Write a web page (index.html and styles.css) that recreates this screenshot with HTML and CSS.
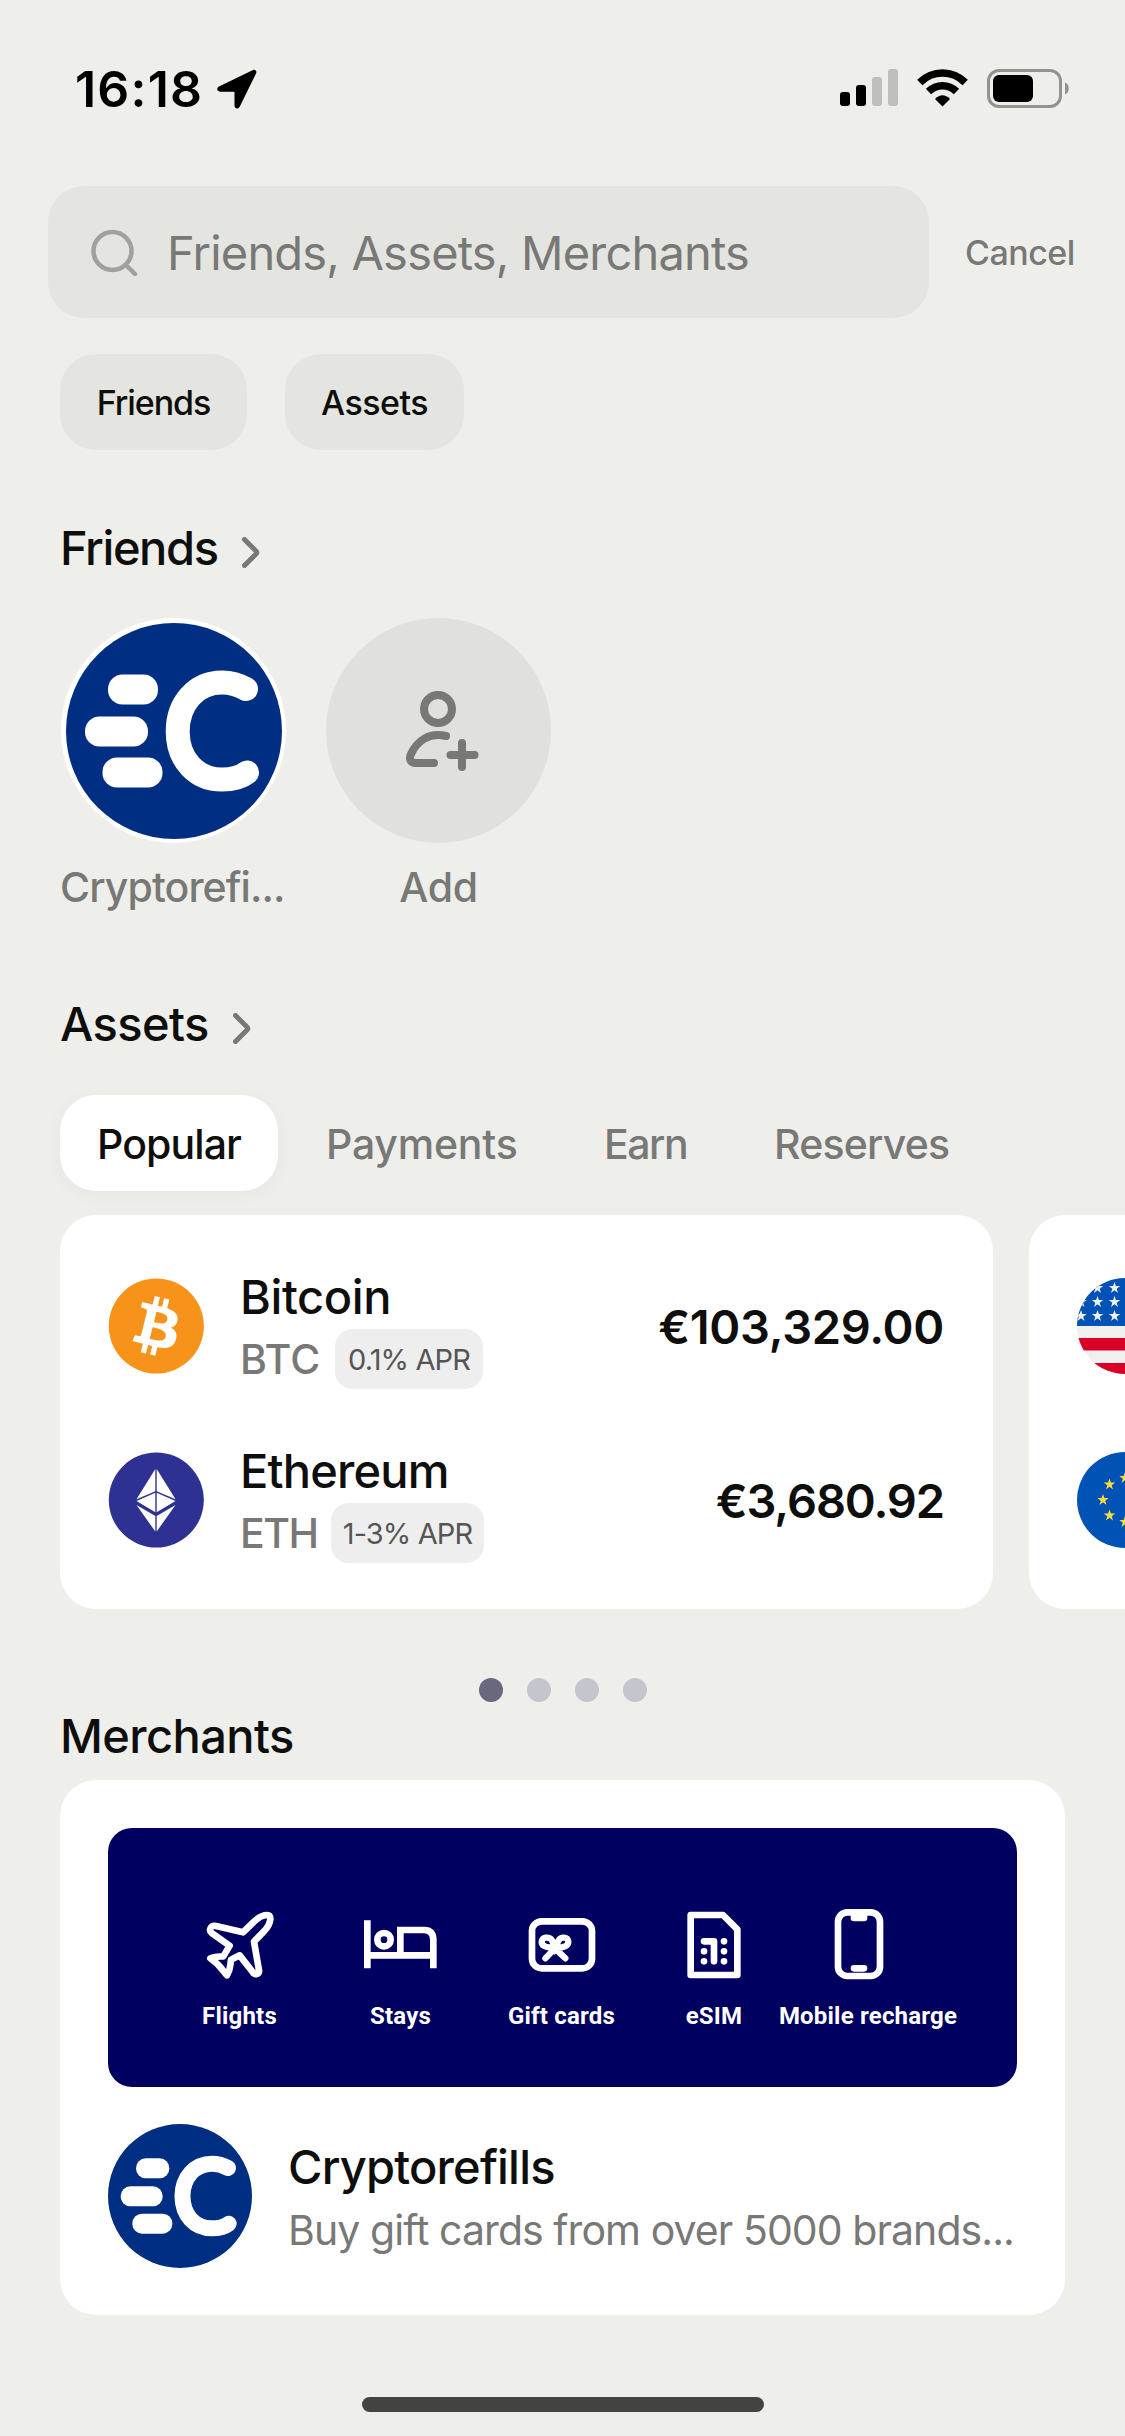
FILE: index.html
```html
<!DOCTYPE html>
<html lang="en">
<head>
  <meta charset="UTF-8">
  <meta name="viewport" content="width=device-width, initial-scale=1.0">
  <title>Search</title>
  <link rel="stylesheet" href="styles.css">
</head>
<body>

  <svg class="defs" width="0" height="0">
    <symbol id="logo" viewBox="5 4.5 216 216">
      <rect x="5" y="4.5" width="216" height="216" fill="#002e83"/>
      <g fill="#fff">
        <rect x="47" y="56" width="50" height="30" rx="14.5"/>
        <rect x="24" y="98" width="63" height="30" rx="14.5"/>
        <rect x="41.5" y="139" width="60" height="30" rx="14.5"/>
      </g>
      <path d="M185 70.500C177 66 170 64 161 64c-26 0-44.300 21-44.300 49s18.300 48 44.300 48c9.500 0 18-1.500 25-7" fill="none" stroke="#fff" stroke-width="24" stroke-linecap="round"/>
    </symbol>
    <symbol id="chevron" viewBox="0 0 18 31">
      <path d="M2.500 2.500L14 14q1.500 1.500 0 3L2.500 28.500" fill="none" stroke="#787876" stroke-width="5" stroke-linecap="round"/>
    </symbol>
    <path id="star" d="M0-6L1.400-1.900H5.700L2.200.7 3.500 4.900 0 2.300-3.500 4.900-2.200.7-5.700-1.900H-1.400z"/>
  </svg>

  <div class="status-bar">
    <div class="time">16:18</div>
    <svg class="location" width="40" height="40" viewBox="0 0 40 40"><path d="M35.500 1.200 2 17.500c-3 1.600-2 5.200 1.200 5.200H16.500c.7 0 1 .3 1 1V36.500c0 3.300 3.700 4 5.200 1.200L39 4.500C40.200 2 38 0 35.500 1.200z"/></svg>
    <div class="status-icons">
      <svg width="58" height="38" viewBox="0 0 58 38">
        <rect x="0" y="23" width="10" height="14" rx="3"/>
        <rect x="16" y="16" width="10" height="21" rx="3"/>
        <rect x="32" y="8" width="10" height="29" rx="3" fill="#bebfba"/>
        <rect x="48" y="0" width="10" height="37" rx="3" fill="#bebfba"/>
      </svg>
      <svg class="wifi" width="51" height="38" viewBox="0 0 51 38">
        <path d="M2.800 13.500C15.500.8 35.500.8 48.200 13.500" fill="none" stroke="#000" stroke-width="7.500"/>
        <path d="M11.500 22.500c8-7.800 20-7.800 28 0" fill="none" stroke="#000" stroke-width="7.500"/>
        <path d="M25.500 37.500 18 30q7.500-7.500 15 0z"/>
      </svg>
      <svg width="83" height="39" viewBox="0 0 83 39">
        <rect x="1.500" y="1.500" width="72" height="36" rx="10.500" fill="none" stroke="#92938f" stroke-width="3"/>
        <rect x="6" y="6" width="40" height="27" rx="6"/>
        <path d="M78 13.500c5 1.500 5 10.500 0 12z" fill="#92938f"/>
      </svg>
    </div>
  </div>

  <div class="search-row">
    <div class="search-box">
      <svg width="48" height="48" viewBox="0 0 48 48"><path d="M41.500 23A19 19 0 1 1 3.500 23a19 19 0 0 1 38 0zM36 37l9 9" fill="none" stroke="#a0a09d" stroke-width="4.500" stroke-linecap="round"/></svg>
      <span class="placeholder">Friends, Assets, Merchants</span>
    </div>
    <span class="cancel">Cancel</span>
  </div>

  <div class="chips">
    <div class="chip chip-friends">Friends</div>
    <div class="chip chip-assets">Assets</div>
  </div>

  <div class="heading heading-friends">Friends <svg width="18" height="31"><use href="#chevron"/></svg></div>

  <div class="friends">
    <div class="friend">
      <div class="avatar avatar-logo"><svg width="216" height="216"><use href="#logo"/></svg></div>
      <div class="friend-name name-cut">Cryptorefi...</div>
    </div>
    <div class="friend">
      <div class="avatar avatar-add">
        <svg width="74" height="82" viewBox="406 690 74 82" fill="none" stroke="#787876" stroke-width="8" stroke-linecap="round" stroke-linejoin="round">
          <circle cx="439" cy="709" r="14"/>
          <path d="M447 736c-17-4-29 5-35 18-2.500 5.500 0 9 4.500 9H435M463 743v24M451.500 755h24"/>
        </svg>
      </div>
      <div class="friend-name">Add</div>
    </div>
  </div>

  <div class="heading heading-assets">Assets <svg width="18" height="31"><use href="#chevron"/></svg></div>

  <div class="tabs">
    <div class="tab tab-active">Popular</div>
    <div class="tab tab-payments">Payments</div>
    <div class="tab tab-earn">Earn</div>
    <div class="tab tab-reserves">Reserves</div>
  </div>

  <div class="asset-cards">
    <div class="asset-card">
      <div class="asset">
        <svg class="coin" width="96" height="96" viewBox="0 0 32 32">
          <circle cx="16.100" cy="16" r="15.850" fill="#f7931a"/>
          <path fill="#fff" d="M23.189 14.020c.314-2.096-1.283-3.223-3.465-3.975l.708-2.840-1.728-.43-.69 2.765c-.454-.114-.92-.22-1.385-.326l.695-2.783L15.596 6l-.708 2.839c-.376-.086-.746-.17-1.104-.26l.002-.009-2.384-.595-.46 1.846s1.283.294 1.256.312c.7.175.826.638.805 1.006l-.806 3.235c.048.012.11.03.18.057l-.183-.045-1.130 4.532c-.086.212-.303.531-.793.41.018.025-1.256-.313-1.256-.313l-.858 1.978 2.250.561c.418.105.828.215 1.231.318l-.715 2.872 1.727.43.708-2.840c.472.127.93.245 1.378.357l-.706 2.828 1.728.43.715-2.866c2.948.558 5.164.333 6.097-2.333.752-2.146-.037-3.385-1.588-4.192 1.130-.26 1.980-1.003 2.207-2.538zm-3.950 5.538c-.533 2.147-4.148.986-5.320.695l.95-3.805c1.172.293 4.929.872 4.370 3.110zm.535-5.569c-.487 1.953-3.495.96-4.470.717l.86-3.450c.975.243 4.118.696 3.610 2.733z"/>
        </svg>
        <div class="asset-info">
          <div class="asset-name name-btc">Bitcoin</div>
          <div class="asset-sub"><span class="ticker ticker-btc">BTC</span><span class="apr apr-btc">0.1% APR</span></div>
        </div>
        <div class="price">€103,329.00</div>
      </div>
      <div class="asset">
        <svg class="coin" width="96" height="96" viewBox="0 0 96 96">
          <circle cx="48.300" cy="48" r="47.500" fill="#2e3192"/>
          <g fill="#fff">
            <path d="M47.300 17v22.200L28.500 47.300zM48.700 17v22.200l18.800 8.100zM47.300 40.700v19.500L28.500 49zM48.700 40.700v19.500L67.500 49z"/>
            <path d="M47.300 64v15.500L28.500 53zM48.700 64v15.500L67.500 53z"/>
          </g>
        </svg>
        <div class="asset-info">
          <div class="asset-name name-eth">Ethereum</div>
          <div class="asset-sub"><span class="ticker ticker-eth">ETH</span><span class="apr apr-eth">1-3% APR</span></div>
        </div>
        <div class="price price-eth">€3,680.92</div>
      </div>
    </div>
    <div class="asset-card">
      <div class="asset">
        <svg class="coin flag" width="96" height="96" viewBox="0 0 96 96">
          <rect width="96" height="96" fill="#f0f0f0"/>
          <path d="M0 60h96v12.500H0zM0 85h96v11H0z" fill="#d80027"/>
          <rect width="96" height="48" fill="#0052b4"/>
          <g fill="#f0f0f0">
            <use href="#star" x="4" y="10"/><use href="#star" x="20.500" y="10"/><use href="#star" x="37.500" y="10"/>
            <use href="#star" x="4" y="24"/><use href="#star" x="20.500" y="24"/><use href="#star" x="37.500" y="24"/>
            <use href="#star" x="4" y="38"/><use href="#star" x="20.500" y="38"/><use href="#star" x="37.500" y="38"/>
          </g>
        </svg>
      </div>
      <div class="asset">
        <svg class="coin flag" width="96" height="96" viewBox="0 0 96 96">
          <rect width="96" height="96" fill="#0052b4"/>
          <g fill="#ffda44">
            <use href="#star" x="48" y="26"/><use href="#star" x="32.500" y="32.500"/><use href="#star" x="26" y="48"/>
            <use href="#star" x="32.500" y="63.500"/><use href="#star" x="48" y="70"/>
          </g>
        </svg>
      </div>
    </div>
  </div>

  <div class="dots">
    <span class="dot dot-active"></span><span class="dot"></span><span class="dot"></span><span class="dot"></span>
  </div>

  <div class="heading heading-merchants">Merchants</div>

  <div class="merchant-card">
    <div class="banner">
      <div class="service">
        <svg width="72" height="72" viewBox="310 268 216 216" stroke-linejoin="round"><path d="M459 307c14-14 27-21 40-21q10 0 10 12c-1 13-8 26-20 38l-29 30 15 86c2 13-13 15-19 5l-39-50-26 13c-3 19 0 27-12 47-11-10-17-29-50-51 11-6 25-5 39-6l19-32-53-37c-12-9-3-26 12-22l81 19z"/></svg>
        <span>Flights</span>
      </div>
      <div class="service">
        <svg width="73" height="72" viewBox="795 268 219 216"><path d="M805 302v144M805 407h198M904 407v-76h71q28 0 28 30v85"/><circle cx="855" cy="360" r="20"/></svg>
        <span>Stays</span>
      </div>
      <div class="service">
        <svg width="72" height="72" viewBox="1279 268 216 216" stroke-linecap="round"><rect x="1297" y="305" width="180" height="141" rx="29"/><path d="M1337 416l31-32c24 1 38-5 38-17 0-17-22-16-29-5l-11 22-9-22c-7-11-31-12-31 5 0 12 15 17 38 17l33 32" stroke-width="19"/></svg>
        <span>Gift cards</span>
      </div>
      <div class="service">
        <svg width="72" height="72" viewBox="236 268 216 216" stroke-linecap="round" stroke-linejoin="round"><path d="M274 286h97l43 43v137H274zM314 365h30v60M314 395h.1M314 425h.1M374 365h.1M374 395h.1M374 425h.1"/></svg>
        <span>eSIM</span>
      </div>
      <div class="service">
        <svg class="phone" width="72" height="72" viewBox="667 268 216 216"><rect x="712" y="278" width="126" height="191" rx="28"/><path d="M760 288v7h30v-7zM760 446h30" stroke-linecap="round" stroke-linejoin="round"/></svg>
        <span>Mobile recharge</span>
      </div>
    </div>
    <div class="merchant">
      <div class="merchant-logo"><svg width="144" height="144"><use href="#logo"/></svg></div>
      <div class="merchant-info">
        <div class="merchant-name">Cryptorefills</div>
        <div class="merchant-text">Buy gift cards from over 5000 brands...</div>
      </div>
    </div>
  </div>

  <div class="home-indicator"></div>

</body>
</html>
```
FILE: styles.css
```css
* {
  box-sizing: border-box;
}

body {
  margin: 0;
  width: 1125px;
  height: 2436px;
  overflow: hidden;
  background-color: #eeefeb;
  color: #0e0e0c;
  font-family: Inter, "Liberation Sans", sans-serif;
  white-space: nowrap;
}

svg {
  display: block;
  flex-shrink: 0;
}

.defs {
  display: none;
}

.status-bar {
  height: 186px;
  padding: 59px 55px 0 75px;
  display: flex;
  align-items: flex-start;
}

.time {
  width: 142px;
  font-size: 50px;
  line-height: 60px;
  font-weight: 600;
  letter-spacing: 1.2px;
  color: #000;
}

.location {
  margin-top: 10px;
}

.status-icons {
  display: flex;
  margin: 10px 0 0 auto;
}

.wifi {
  margin: 0 19px;
}

.search-row {
  display: flex;
  align-items: center;
  height: 132px;
  padding-left: 48px;
}

.search-box {
  display: flex;
  align-items: center;
  width: 881px;
  height: 132px;
  padding-left: 42px;
  background-color: #e4e5e0;
  border-radius: 36px;
}

.placeholder {
  margin-left: 29px;
  font-size: 47px;
  letter-spacing: -0.8px;
  color: #787876;
}

.cancel {
  margin-left: 36px;
  font-size: 34px;
  font-weight: 550;
  letter-spacing: -0.5px;
  color: #787876;
}

.chips {
  display: flex;
  gap: 38px;
  margin: 36px 0 0 60px;
}

.chip {
  height: 96px;
  border-radius: 36px;
  background-color: #e4e5e0;
  text-align: center;
  font-size: 34px;
  line-height: 98px;
  font-weight: 550;
}

.chip-friends {
  width: 187px;
  letter-spacing: -1.1px;
}

.chip-assets {
  width: 179px;
  letter-spacing: -0.5px;
}

.heading {
  display: flex;
  height: 56px;
  padding-left: 60px;
  font-size: 47px;
  line-height: 56px;
  font-weight: 550;
}

.heading svg {
  margin: 17px 0 0 24px;
}

.heading-friends {
  margin-top: 70px;
  letter-spacing: -1.4px;
}

.friends {
  display: flex;
  gap: 40px;
  margin: 42px 0 0 61px;
}

.friend {
  width: 225px;
}

.avatar {
  display: flex;
  align-items: center;
  justify-content: center;
  height: 225px;
  border-radius: 50%;
}

.avatar-logo {
  background-color: #fff;
}

.avatar-logo svg,
.merchant-logo svg,
.flag {
  border-radius: 50%;
}

.avatar-add {
  background-color: #e0e1dc;
  padding-left: 7px;
}

.friend-name {
  margin-top: 19px;
  text-align: center;
  font-size: 41px;
  line-height: 50px;
  font-weight: 550;
  letter-spacing: -0.3px;
  color: #787876;
}

.name-cut {
  margin-left: -1px;
  text-align: left;
  letter-spacing: -0.9px;
}

.heading-assets {
  margin-top: 84px;
  letter-spacing: -0.6px;
}

.tabs {
  display: flex;
  margin: 43px 0 0 60px;
  height: 96px;
  font-size: 41px;
  line-height: 98px;
  font-weight: 550;
  color: #787876;
}

.tab-active {
  width: 218px;
  margin-right: 48px;
  border-radius: 36px;
  background-color: #fff;
  box-shadow: 0 3px 18px rgba(0, 0, 0, 0.04);
  text-align: center;
  letter-spacing: -0.9px;
  color: #0e0e0c;
}

.tab-payments {
  width: 278px;
  letter-spacing: -0.2px;
}

.tab-earn {
  width: 170px;
  letter-spacing: -1.5px;
}

.tab-reserves {
  letter-spacing: -0.8px;
}

.asset-cards {
  display: flex;
  gap: 36px;
  margin-top: 24px;
  padding-left: 60px;
  overflow: hidden;
}

.asset-card {
  flex-shrink: 0;
  width: 933px;
  height: 394px;
  padding: 48px 49px 0 48px;
  border-radius: 36px;
  background-color: #fff;
}

.asset {
  display: flex;
  height: 174px;
}

.coin {
  margin-top: 15px;
}

.asset-info {
  margin-left: 36px;
}

.asset-name {
  margin-top: 6px;
  font-size: 47px;
  line-height: 56px;
  font-weight: 550;
}

.name-btc {
  letter-spacing: -0.4px;
}

.name-eth {
  letter-spacing: -0.8px;
}

.asset-sub {
  display: flex;
  align-items: center;
  height: 60px;
  margin-top: 4px;
  color: #787876;
}

.ticker {
  font-size: 41px;
  font-weight: 550;
}

.ticker-btc {
  width: 95px;
}

.ticker-eth {
  width: 91px;
  letter-spacing: -1.5px;
}

.apr {
  height: 60px;
  border-radius: 18px;
  background-color: #eeeeee;
  text-align: center;
  font-size: 29px;
  line-height: 62px;
  letter-spacing: -0.9px;
  color: #555;
}

.apr-btc {
  width: 148px;
}

.apr-eth {
  width: 153px;
}

.price {
  margin: 36px 0 0 auto;
  font-size: 47px;
  line-height: 56px;
  font-weight: 580;
  letter-spacing: -0.3px;
}

.price-eth {
  letter-spacing: -1.1px;
}

.dots {
  display: flex;
  justify-content: center;
  gap: 24px;
  margin-top: 69px;
}

.dot {
  width: 24px;
  height: 24px;
  border-radius: 50%;
  background-color: #c4c5cf;
}

.dot-active {
  background-color: #69687f;
}

.heading-merchants {
  margin-top: 6px;
  letter-spacing: -0.6px;
}

.merchant-card {
  width: 1005px;
  height: 535px;
  margin: 16px 0 0 60px;
  padding: 48px;
  border-radius: 36px;
  background-color: #fff;
}

.banner {
  display: grid;
  grid-template-columns: 161px 161px 161px 144px 164px;
  height: 259px;
  padding: 81px 0 0 51px;
  border-radius: 24px;
  background-color: #000060;
}

.service {
  display: flex;
  flex-direction: column;
  align-items: center;
  font-family: Roboto, sans-serif;
  font-size: 24px;
  line-height: 30px;
  font-weight: 700;
  letter-spacing: 0.2px;
  color: #fff;
}

.service svg {
  margin-bottom: 20px;
  fill: none;
  stroke: #fff;
  stroke-width: 20px;
}

.service .phone {
  margin-right: 19px;
}

.merchant {
  display: flex;
  margin-top: 37px;
}

.merchant-info {
  margin-left: 36px;
}

.merchant-name {
  margin-top: 15px;
  font-size: 47px;
  line-height: 56px;
  font-weight: 550;
  letter-spacing: -0.8px;
}

.merchant-text {
  margin-top: 10px;
  font-size: 41px;
  line-height: 50px;
  letter-spacing: -0.93px;
  color: #787876;
}

.home-indicator {
  width: 402px;
  height: 15px;
  margin: 82px 0 0 362px;
  border-radius: 8px;
  background-color: #434340;
}
```
